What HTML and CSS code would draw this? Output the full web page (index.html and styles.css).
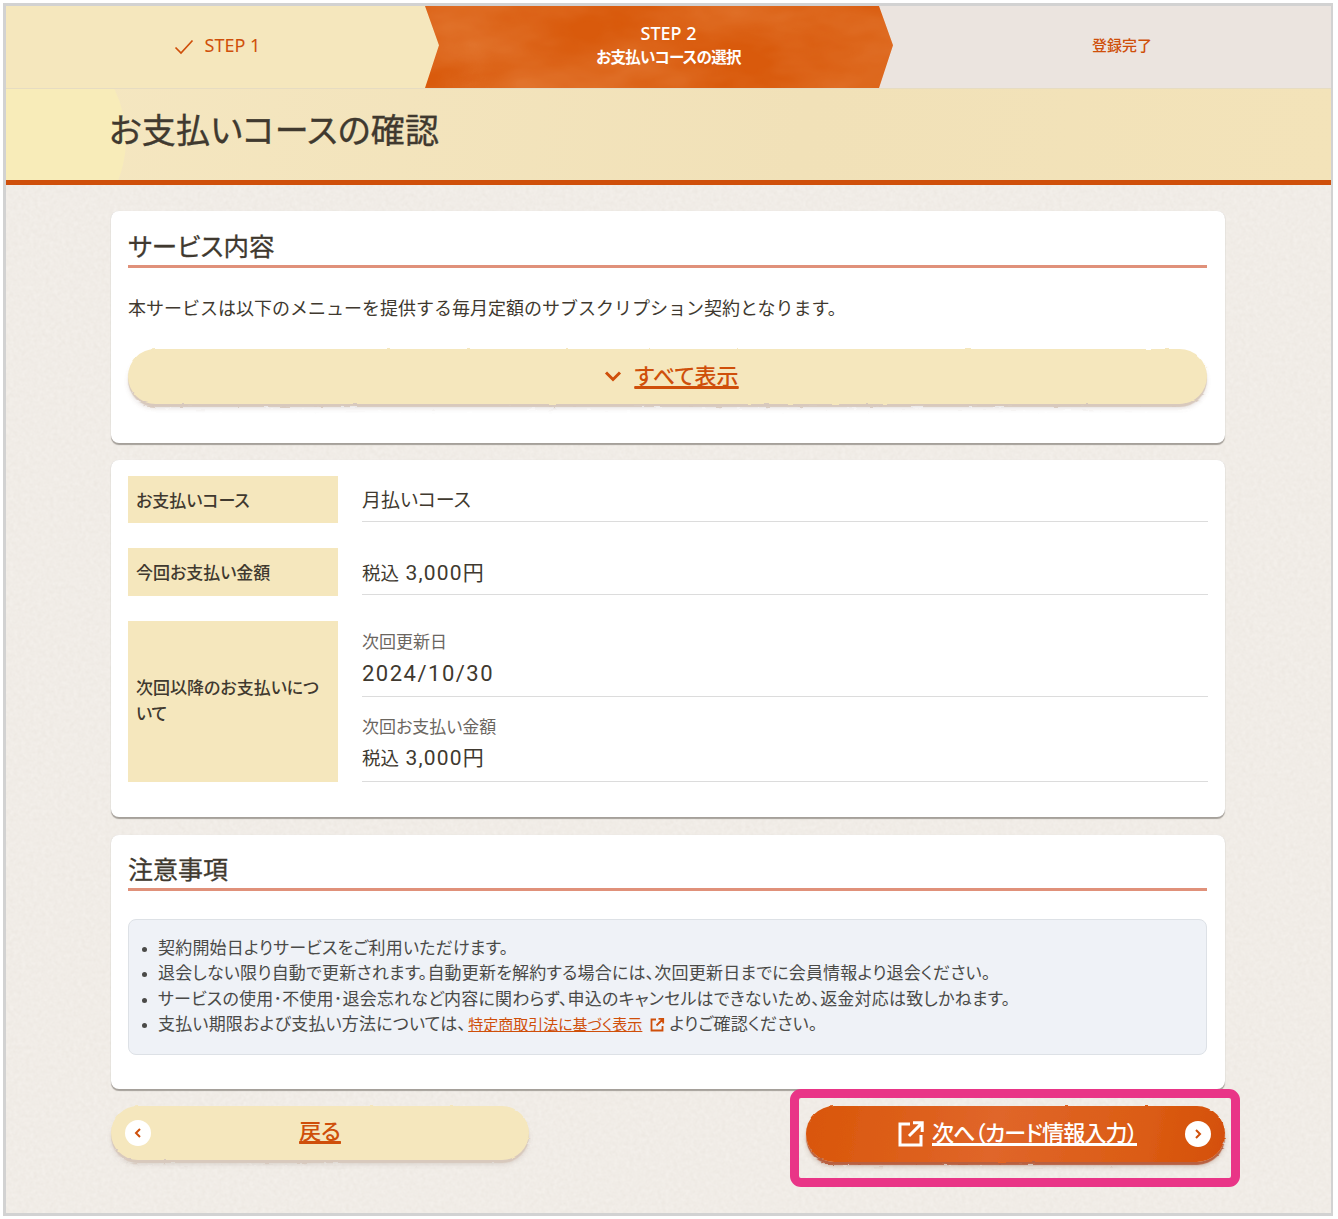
FILE: index.html
```html
<!DOCTYPE html>
<html lang="ja">
<head>
<meta charset="utf-8">
<title>お支払いコースの確認</title>
<link rel="stylesheet" href="styles.css">
</head>
<body>
<svg class="defs" width="0" height="0" aria-hidden="true">
  <defs>
    <filter id="rough" x="-2%" y="-10%" width="104%" height="120%">
      <feTurbulence type="fractalNoise" baseFrequency="0.06 0.2" numOctaves="3" seed="4"/>
      <feDisplacementMap in="SourceGraphic" scale="2.2" xChannelSelector="R" yChannelSelector="G"/>
    </filter>
    <filter id="paper" x="0" y="0" width="100%" height="100%">
      <feTurbulence type="fractalNoise" baseFrequency="0.25" numOctaves="3" seed="8"/>
      <feColorMatrix values="0 0 0 0 .45  0 0 0 0 .38  0 0 0 0 .3  .09 .09 0 0 -.05"/>
    </filter>
    <filter id="wash" x="0" y="0" width="100%" height="100%">
      <feTurbulence type="fractalNoise" baseFrequency="0.008 0.018" numOctaves="4" seed="11"/>
      <feColorMatrix values="0 0 0 0 1  0 0 0 0 .62  0 0 0 0 .35  1.4 1.1 0 0 -.85"/>
    </filter>
  </defs>
</svg>
<div class="frame">
  <div class="paper"></div>
  <ol class="steps">
    <li class="step step-done">
      <svg class="check" viewBox="0 0 20 16" width="20" height="16"><path d="M1.5 8.5 7 14 18.5 1.5" fill="none" stroke="#cf4f0a" stroke-width="1.7"/></svg>
      <span>STEP 1</span>
    </li>
    <li class="step step-current">
      <div class="wash"></div>
      <strong class="step-num">STEP 2</strong>
      <strong class="step-name">お支払いコースの選択</strong>
    </li>
    <li class="step step-todo"><span>登録完了</span></li>
  </ol>
  <header class="title-band"><h1>お支払いコースの確認</h1></header>
  <main class="content">
    <section class="card card-service">
      <h2>サービス内容</h2>
      <p class="lead">本サービスは以下のメニューを提供する毎月定額のサブスクリプション契約となります。</p>
      <a class="btn btn-light btn-full" href="#">
        <svg class="chev-down" viewBox="0 0 18 12" width="18" height="12"><path d="M2 2.5 9 9.5 16 2.5" fill="none" stroke="#cf4f0a" stroke-width="3"/></svg>
        <span class="btn-label">すべて表示</span>
      </a>
    </section>
    <section class="card card-course">
      <dl class="rows">
        <dt class="row-a">お支払いコース</dt>
        <dd class="row-a"><div class="val val-course">月払いコース</div></dd>
        <dt class="row-b">今回お支払い金額</dt>
        <dd class="row-b"><div class="val val-num"><span class="tax">税込</span> 3,000円</div></dd>
        <dt class="row-c"><span>次回以降のお支払いについて</span></dt>
        <dd class="row-c">
          <div class="val val-sub first"><small>次回更新日</small><span class="num">2024/10/30</span></div>
          <div class="val val-sub"><small>次回お支払い金額</small><span class="num"><span class="tax">税込</span> 3,000円</span></div>
        </dd>
      </dl>
    </section>
    <section class="card card-notes">
      <h2>注意事項</h2>
      <ul class="notes">
        <li>契約開始日よりサービスをご利用いただけます。</li>
        <li>退会しない限り自動で更新されます。自動更新を解約する場合には、次回更新日までに会員情報より退会ください。</li>
        <li>サービスの使用･不使用･退会忘れなど内容に関わらず、申込のキャンセルはできないため、返金対応は致しかねます。</li>
        <li>支払い期限および支払い方法については、<a href="#">特定商取引法に基づく表示<svg class="ext-small" viewBox="0 0 16 16" width="16" height="16"><path d="M7 2.5H2.5v11h11V9M9.5 1.8h4.7v4.7M14 2 7.5 8.5" fill="none" stroke="#cf4f0a" stroke-width="1.8"/></svg></a> よりご確認ください。</li>
      </ul>
    </section>
    <nav class="actions">
      <a class="btn btn-light btn-back" href="#">
        <span class="circle circle-left"><svg viewBox="0 0 10 12" width="10" height="12"><path d="M7 2 3 6 7 10" fill="none" stroke="#cf4f0a" stroke-width="2"/></svg></span>
        <span class="btn-label">戻る</span>
      </a>
      <a class="btn btn-next" href="#">
        <svg class="ext-large" viewBox="0 0 26 26" width="26" height="26"><path d="M12 3H2v21h21V14M15 1.8h9.2V11M23.6 2.4 11 15" fill="none" stroke="#fff" stroke-width="3"/></svg>
        <span class="btn-label">次へ（カード情報入力）</span>
        <span class="circle circle-right"><svg viewBox="0 0 10 12" width="10" height="12"><path d="M3 2 7 6 3 10" fill="none" stroke="#cf4f0a" stroke-width="2"/></svg></span>
      </a>
    </nav>
  </main>
  <div class="highlight"></div>
</div>
</body>
</html>
```

FILE: styles.css
```css
* { box-sizing: border-box; }
html, body { margin: 0; padding: 0; background: #fff; }
body {
  width: 1338px;
  height: 1219px;
  padding: 3px 5px 3px 3px;
  font-family: "Noto Sans CJK JP", "Noto Sans", sans-serif;
  font-feature-settings: "palt";
  color: #40392f;
  overflow: hidden;
}
.defs { position: absolute; }
.frame {
  position: relative;
  height: 1213px;
  border: 3px solid #d2d2d2;
  border-right-width: 2px;
  background: #f3efea;
  overflow: hidden;
}
.paper {
  position: absolute;
  inset: 88px 0 0 0;
  filter: url(#paper);
}

/* steps */
.steps {
  position: relative;
  display: flex;
  height: 82px;
  margin: 0;
  padding: 0;
  list-style: none;
}
.step {
  display: flex;
  align-items: center;
  justify-content: center;
  color: #cf4f0a;
}
.step-done {
  flex: 0 0 433px;
  gap: 11px;
  padding: 0 11px 4px 0;
  background: #f5e7bd;
  font-family: "Noto Sans", sans-serif;
  font-size: 18px;
}
.check { margin-top: 3px; }
.step-current {
  position: relative;
  z-index: 2;
  flex: 0 0 470px;
  margin-left: -15px;
  flex-direction: column;
  padding: 0 0 6px 19px;
  overflow: hidden;
  color: #fff;
  background: #d95a0c;
  clip-path: polygon(0 100%, 1px 100%, 15px 48%, 1px 0, 455px 0, 469px 48%, 455px 100%);
}
.wash {
  position: absolute;
  inset: 0;
  filter: url(#wash);
  opacity: .22;
}
.step-num {
  position: relative;
  font-family: "Noto Sans", sans-serif;
  font-size: 18px;
  font-weight: 500;
  line-height: 24px;
}
.step-name {
  position: relative;
  font-size: 15.5px;
  font-weight: 700;
  line-height: 22px;
  letter-spacing: -.7px;
}
.step-todo {
  flex: 1;
  margin-left: -15px;
  padding: 0 0 5px 34px;
  background: #ebe4df;
  font-size: 15px;
  font-weight: 500;
}

/* title */
.title-band {
  position: relative;
  height: 97px;
  padding: 16px 0 0 103px;
  background: linear-gradient(100deg, #f5e7c1, #f1e1b8 60%, #f3e3b9);
  border-top: 1px solid #e6dcc2;
  border-bottom: 5px solid #cf4f0a;
  overflow: hidden;
}
.title-band::before {
  content: "";
  position: absolute;
  left: -180px;
  top: -80px;
  width: 300px;
  height: 260px;
  border-radius: 50%;
  background: #f8ecb9;
}
.title-band h1 {
  position: relative;
  margin: 0;
  font-size: 34px;
  font-weight: 400;
  -webkit-text-stroke: .35px #40392f;
  line-height: 48px;
  letter-spacing: .2px;
}

/* content */
.content {
  position: relative;
  display: flex;
  flex-direction: column;
  width: 1114px;
  margin: 26px 0 0 105px;
}
.card {
  padding: 0 17px;
  margin-bottom: 17px;
  background: #fff;
  border-radius: 8px;
  box-shadow: 0 1.5px 1px #a5a09a, 0 0 1px #ddd;
}
.card h2 {
  margin: 0;
  padding-bottom: 5px;
  font-size: 25.5px;
  font-weight: 400;
  -webkit-text-stroke: .3px #40392f;
  line-height: 31px;
  border-bottom: 3px solid #e0917a;
}
.card-service { height: 232px; padding: 18px 18px 0 17px; }
.lead {
  margin: 24px 0 27px;
  font-size: 18px;
  line-height: 30px;
  font-feature-settings: normal;
}

/* buttons */
.btn {
  position: relative;
  display: flex;
  align-items: center;
  justify-content: center;
  height: 55px;
  color: #cf4f0a;
  font-size: 22px;
  font-weight: 500;
}
.btn::before {
  content: "";
  position: absolute;
  inset: 0;
  border-radius: 28px;
  background: #f5e7bd;
  box-shadow: 0 3px 1px #d8c9bd, 0 5px 4px rgba(150, 130, 120, .2);
  filter: url(#rough);
}
.btn > * { position: relative; }
.btn-label { margin-bottom: 6px; text-decoration: underline; text-underline-offset: 3px; }
.btn-full { gap: 12px; padding-left: 8px; }
.chev-down { margin-bottom: 2px; }

/* table */
.card-course { height: 357px; margin-bottom: 18px; padding-top: 16px; }
.rows {
  display: grid;
  grid-template-columns: 210px 1fr;
  grid-template-rows: 47px 48px 161px;
  column-gap: 24px;
  row-gap: 25px;
  margin: 0;
}
.rows dt {
  display: flex;
  align-items: center;
  padding: 0 8px;
  background: #f5e7bd;
  font-size: 17px;
  font-weight: 500;
  line-height: 26px;
}
.rows dt.row-c { padding-bottom: 3px; }
.rows dd { margin: 0; }
.val {
  border-bottom: 1px solid #dcdcdc;
  font-size: 20px;
}
.val-course { height: 46px; padding-top: 7px; line-height: 32px; font-size: 19px; }
.val-num { height: 47px; padding-top: 8px; line-height: 34px; font-family: "Roboto", "Noto Sans CJK JP", sans-serif; font-size: 21px; letter-spacing: 1.2px; }
.tax { font-size: 18.5px; letter-spacing: 0; }
.val-sub { display: flex; flex-direction: column; height: 85px; padding-top: 16px; }
.val-sub.first { height: 76px; padding-top: 7px; }
.val-sub small { font-size: 17px; line-height: 26px; color: #6b665f; }
.val-sub .num { margin-top: 2px; font-family: "Roboto", "Noto Sans CJK JP", sans-serif; font-size: 22px; line-height: 36px; letter-spacing: 1.5px; }
.val-sub:not(.first) .num { margin-top: 1px; font-size: 21px; letter-spacing: 1.2px; }

/* notes */
.card-notes { height: 254px; padding: 17px 18px 0 17px; }
.card-notes h2 { padding: 1px 0 4px; font-size: 25px; }
.notes {
  height: 136px;
  margin: 28px 0 0;
  padding: 14px 0 0 29px;
  background: #eff2f7;
  border: 1px solid #dde1e6;
  border-radius: 8px;
  font-size: 17px;
  line-height: 25.3px;
  letter-spacing: .2px;
  color: #4a4a48;
}
.notes li::marker { font-size: 12px; }
.notes a { margin-left: 2px; color: #cf4f0a; font-size: 15px; letter-spacing: 0; text-decoration: underline; }
.ext-small { margin-left: 7px; vertical-align: -3px; }

/* actions */
.actions {
  display: flex;
  justify-content: space-between;
  align-items: flex-start;
}
.btn-back { flex: 0 0 418px; height: 54px; }
.btn-back .btn-label { margin-bottom: 8px; }
.btn-next {
  flex: 0 0 419px;
  height: 56px;
  gap: 8px;
  color: #fff;
  padding-left: 4px;
}
.btn-next .btn-label { letter-spacing: -.8px; }
.btn-next::before {
  background: linear-gradient(100deg, #d95608 0%, #e0662a 45%, #db5c14 80%, #d44f06 100%);
  box-shadow: 0 3px 1px #b9603f, 0 5px 4px rgba(150, 110, 90, .3);
}
.circle {
  position: absolute !important;
  top: 50%;
  display: flex;
  align-items: center;
  justify-content: center;
  width: 26px;
  height: 26px;
  margin-top: -13px;
  border-radius: 50%;
  background: #fff;
}
.circle-left { left: 14px; }
.circle-right { right: 14px; }

.highlight {
  position: absolute;
  left: 784px;
  top: 1083px;
  width: 450px;
  height: 98px;
  border: 9px solid #e93587;
  border-radius: 11px;
}
```
